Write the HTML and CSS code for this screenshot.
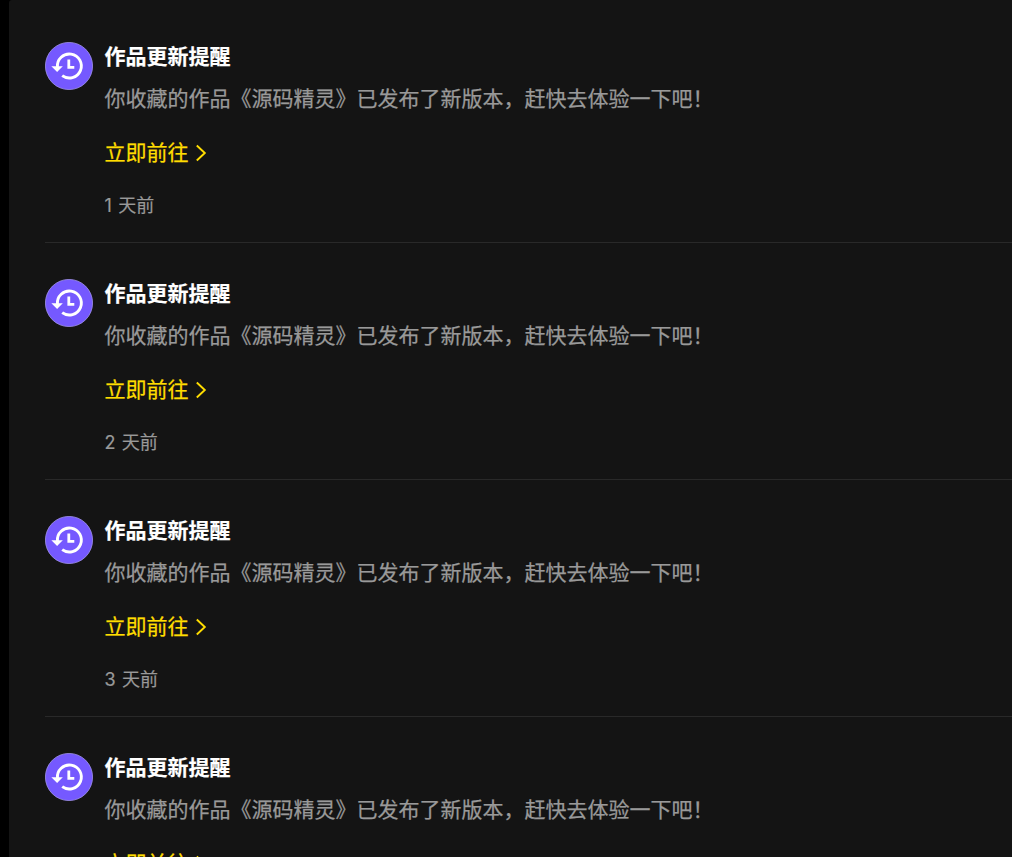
FILE: index.html
```html
<!DOCTYPE html>
<html lang="zh-CN">
<head>
<meta charset="utf-8">
<title>作品更新提醒</title>
<link rel="stylesheet" href="styles.css">
</head>
<body>
<svg width="0" height="0" class="defs" aria-hidden="true">
  <symbol id="history" viewBox="0 0 48 48">
    <circle cx="24" cy="24" r="23.6" fill="#7559ff" stroke="#a193ef" stroke-width=".8"/>
    <path d="M12.4 25A12 12 0 1 1 17.2 33.6" fill="none" stroke="#fff" stroke-width="2.9"/>
    <path d="M6.4 24.2h11.4L12.1 30z" fill="#fff"/>
    <path d="M23.8 17.6v7.7h5.5" fill="none" stroke="#fff" stroke-width="2.8"/>
  </symbol>
  <symbol id="chevron" viewBox="0 0 12 18">
    <path d="M1.8 1.5L9.8 9L1.8 16.5" fill="none" stroke="#ffdd00" stroke-width="1.9"/>
  </symbol>
</svg>
<main class="panel">
  <article class="notice">
    <svg class="avatar"><use href="#history"/></svg>
    <div class="body">
      <h2 class="title">作品更新提醒</h2>
      <p class="desc">你收藏的作品《源码精灵》已发布了新版本，赶快去体验一下吧！</p>
      <a class="link">立即前往<svg class="arrow"><use href="#chevron"/></svg></a>
      <time class="time">1 天前</time>
    </div>
  </article>
  <article class="notice">
    <svg class="avatar"><use href="#history"/></svg>
    <div class="body">
      <h2 class="title">作品更新提醒</h2>
      <p class="desc">你收藏的作品《源码精灵》已发布了新版本，赶快去体验一下吧！</p>
      <a class="link">立即前往<svg class="arrow"><use href="#chevron"/></svg></a>
      <time class="time">2 天前</time>
    </div>
  </article>
  <article class="notice">
    <svg class="avatar"><use href="#history"/></svg>
    <div class="body">
      <h2 class="title">作品更新提醒</h2>
      <p class="desc">你收藏的作品《源码精灵》已发布了新版本，赶快去体验一下吧！</p>
      <a class="link">立即前往<svg class="arrow"><use href="#chevron"/></svg></a>
      <time class="time">3 天前</time>
    </div>
  </article>
  <article class="notice">
    <svg class="avatar"><use href="#history"/></svg>
    <div class="body">
      <h2 class="title">作品更新提醒</h2>
      <p class="desc">你收藏的作品《源码精灵》已发布了新版本，赶快去体验一下吧！</p>
      <a class="link">立即前往<svg class="arrow"><use href="#chevron"/></svg></a>
    </div>
  </article>
</main>
</body>
</html>
```

FILE: styles.css
```css
* { box-sizing: border-box; margin: 0; padding: 0; }
html, body { height: 100%; overflow: hidden; }
body {
  background: #000;
  font-family: Inter, "Noto Sans CJK SC", sans-serif;
}
.defs { display: none; }
.panel {
  height: 857px;
  margin-left: 9px;
  padding: 6px 0 0 36px;
  overflow: hidden;
  background: #141414;
  border-top-left-radius: 3px;
}
.notice {
  display: flex;
  gap: 11.5px;
  height: 237px;
  padding-top: 36px;
  border-bottom: 1px solid #292929;
}
.avatar { flex: none; width: 48px; height: 48px; }
.body { display: flex; flex-direction: column; align-items: flex-start; }
.title {
  height: 30px;
  font-size: 21px;
  line-height: 30px;
  font-weight: 700;
  color: #fff;
  -webkit-text-stroke: .2px currentColor;
}
.desc {
  height: 30px;
  margin-top: 12px;
  font-size: 21px;
  line-height: 30px;
  color: #999;
  white-space: nowrap;
  -webkit-text-stroke: .25px currentColor;
}
.link {
  display: flex;
  align-items: center;
  gap: 6.5px;
  height: 30px;
  margin-top: 24px;
  font-size: 21px;
  line-height: 30px;
  color: #ffdd00;
  -webkit-text-stroke: .25px currentColor;
}
.arrow { width: 12px; height: 18px; }
.time {
  height: 26px;
  margin-top: 25px;
  font-size: 18px;
  line-height: 26px;
  word-spacing: 1.3px;
  color: #999;
  -webkit-text-stroke: .2px currentColor;
}
```
